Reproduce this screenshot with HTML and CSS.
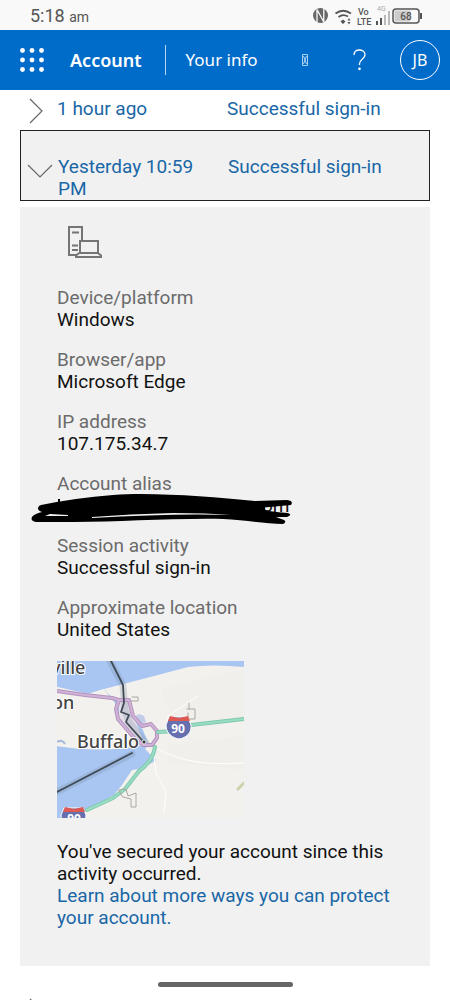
FILE: index.html
```html
<!DOCTYPE html>
<html lang="en">
<head>
<meta charset="utf-8">
<meta name="viewport" content="width=device-width, initial-scale=1">
<title>Account activity</title>
<link rel="stylesheet" href="styles.css">
</head>
<body>
<div class="screen">
  <div class="status">
    <div class="clock">5:18 <small>am</small></div>
    <svg class="status-icons" width="110" height="24" viewBox="0 0 110 24" aria-hidden="true">
      <circle cx="7.500" cy="11.500" r="7.500" fill="#666"/>
      <path d="M4 19.500V5.500L10.800 18V3.500" fill="none" stroke="#f9f9f9" stroke-width="1.300"/>
      <g fill="none" stroke="#555" stroke-width="1.800">
        <path d="M22.500 9.500Q30 4 38 9.500M25.500 13Q30 9.500 35 12.500"/>
      </g>
      <path d="M30 15.500l2.500 2-2.500 2.500-2.500-2.500zM36 14l1.500 2.500h-3zM36 20.500l1.500-2.500h-3z" fill="#555"/>
      <text x="45" y="11" class="net">Vo</text>
      <text x="44" y="21" class="net">LTE</text>
      <text x="64" y="7" class="gen">4G</text>
      <path d="M64 17v4M68 14v7" stroke="#555" stroke-width="2"/>
      <path d="M72 11v10M76 7v14" stroke="#bbb" stroke-width="2"/>
      <rect x="80" y="5" width="26" height="14" rx="3" fill="#f9f9f9" stroke="#555" stroke-width="1.500"/>
      <rect x="81.500" y="6.500" width="16" height="11" rx="1" fill="#ccc"/>
      <path d="M108 9v6" stroke="#555" stroke-width="2"/>
      <text x="93" y="16" class="level" text-anchor="middle">68</text>
    </svg>
  </div>

  <header class="header">
    <button class="apps" aria-label="App launcher">
      <svg width="24" height="24" viewBox="0 0 24 24" fill="#fff"><circle cx="2.500" cy="2.500" r="2.400"/><circle cx="12" cy="2.500" r="2.400"/><circle cx="21.500" cy="2.500" r="2.400"/><circle cx="2.500" cy="12" r="2.400"/><circle cx="12" cy="12" r="2.400"/><circle cx="21.500" cy="12" r="2.400"/><circle cx="2.500" cy="21.500" r="2.400"/><circle cx="12" cy="21.500" r="2.400"/><circle cx="21.500" cy="21.500" r="2.400"/></svg>
    </button>
    <a class="brand" href="#">Account</a>
    <a class="section" href="#">Your info</a>
    <button class="glyph" aria-label="More">
      <svg width="6" height="12" viewBox="0 0 6 12" fill="none" stroke="#d5e8f8" stroke-width=".8"><path d="M.5.500h5v11h-5zM1.500 2l3 8M4.500 2l-3 8"/></svg>
    </button>
    <button class="help" aria-label="Help">
      <svg width="13" height="22" viewBox="0 0 13 22" fill="none" stroke="#fff" stroke-width="1.300"><path d="M1 6C1 2.500 3.200 1 6.300 1S12 3 12 5.800C12 10 6.500 10 6.500 15v1"/><circle cx="6.500" cy="19.800" r=".7" fill="#fff"/></svg>
    </button>
    <button class="avatar">JB</button>
  </header>

  <main class="activity">
    <button class="event">
      <span class="mark"><svg width="14" height="26" viewBox="0 0 14 26" fill="none" stroke="#666" stroke-width="1.200"><path d="M1 1l12 12L1 25"/></svg></span>
      <span>1 hour ago</span><span>Successful sign-in</span>
    </button>
    <button class="event open" aria-expanded="true">
      <span class="mark"><svg width="26" height="14" viewBox="0 0 26 14" fill="none" stroke="#666" stroke-width="1.200"><path d="M1 1l12 12L25 1"/></svg></span>
      <span>Yesterday 10:59 PM</span><span>Successful sign-in</span>
    </button>

    <section class="panel">
      <svg class="device" width="36" height="34" viewBox="0 0 36 34" fill="none" stroke="#757575" stroke-width="2"><path d="M10 30H2V2h13v13M5 7.500h7M5 20.500h6M5 25h6"/><path d="M13 16h18v12H13zM12 28l-3 2.500V32h25v-1.500L31 28"/></svg>
      <dl class="facts">
        <div><dt>Device/platform</dt><dd>Windows</dd></div>
        <div><dt>Browser/app</dt><dd>Microsoft Edge</dd></div>
        <div><dt>IP address</dt><dd>107.175.34.7</dd></div>
        <div><dt>Account alias</dt><dd class="alias"><span>om</span>
          <svg class="scribble" width="264" height="34" viewBox="0 0 264 34" aria-hidden="true"><path d="M11 12Q45 5 83 2C125-1 181 4 225 8L257 7Q264 8 261 12L229 15Q238 19 258 20Q263 22 257 24L246 24L254 27Q257 29 253 31C236 31 215 27 193 26C145 25 89 29 44 29L6 29Q0 28 2 24Q4 21 12 19Q6 17 9 13z" fill="#000"/><path d="M225 8v9l10 2V10z" fill="#000"/><path d="M20 21L38 22 38 23 15 23zM62 24Q100 21 143 20Q178 20 201 22Q145 20 62 25z" fill="#f1f1f1"/><path d="M29 6v7" stroke="#000" stroke-width="2"/></svg>
        </dd></div>
        <div><dt>Session activity</dt><dd>Successful sign-in</dd></div>
        <div><dt>Approximate location</dt><dd>United States</dd></div>
      </dl>

      <svg class="map" width="187" height="157" viewBox="0 0 187 157" role="img" aria-label="Map of Buffalo">
        <rect width="187" height="157" fill="#f3f1ed"/>
        <g fill="#f0efeb"><path d="M104 28l83-20v49l-70 8zM112 84l75-9v34l-76-8z"/></g>
        <path d="M0 0H187V6Q155 3 131 6L78 20 47 28Q56 39 64 40L73 37 76 52 86 69 92 84 88 88 99 99Q87 108 75 109L65 124 57 134 30 149 20 157H0V85Q35 91 68 87L89 84 77 74 61 61 57 45Q44 36 47 28L31 33 0 26z" fill="#a9c6f2"/>
        <path d="M0 26L31 33 47 28 58 42 59 60 79 84 68 87 37 88 0 85z" fill="#f3f1ed"/>
        <path d="M62 40L73 38 77 56 88 84 79 80 62 58z" fill="#e4dfe9"/>
        <path d="M0 81q5-3 8 2" fill="none" stroke="#a9b9dc" stroke-width="2"/>
        <path d="M82 53l5 2 2 6-4 2-8-7z" fill="#c3cce9"/>
        <g fill="none" stroke-linejoin="round" stroke-linecap="round">
          <path d="M97 96l2 16 10 18-2 22M101 88q30 18 86 14M111 73V55l30-20" stroke="#fff" stroke-width="1"/>
          <path d="M53 0l13 25 2 24 4 12 17 21M0 131l75-38" stroke="#73869d" stroke-width="7" opacity=".25"/>
          <path d="M0 30L28 34 55 37 62 39 59 48 61 58 78 78 86 84H95L100 77V70L94 63 85 65 76 55 72 39 62 39" stroke="#b494bd" stroke-width="4"/>
          <path d="M0 30L28 34 55 37 62 39 59 48 61 58 78 78 86 84H95L100 77V70L94 63 85 65 76 55 72 39 62 39" stroke="#d0b1d7" stroke-width="2"/>
          <path d="M187 58L134 64 119 70 101 71M98 86Q96 100 82 110L68 128 56 137 30 149" stroke="#7dc9ae" stroke-width="4"/>
          <path d="M187 58L134 64 119 70 101 71M98 86Q96 100 82 110L68 128 56 137 30 149" stroke="#9adcc4" stroke-width="2"/>
          <path d="M54 0l12 24 1 18-3 9 8 3-3 7 16 18M0 131l75-39" stroke="#414a57" stroke-width="1.800"/>
          <path d="M75 36h6v4h-7M132 42v6M130 48h8v10h-7v-6M62 129l7-1 2 7 8-3v14h-5v-8l-8-2z" stroke="#aaa89f" stroke-width="1"/>
          <path d="M181 128l6-6" stroke="#cbd3ad" stroke-width="3"/>
        </g>
        <g><path d="M112 56l-3 8c0 9 7 13 13 14 7-1 13-6 12-14l-3-8z" fill="#6670ae" stroke="#fff"/><path d="M111 60l2-5 9 2 9-2 2 5z" fill="#dd5a54"/></g>
        <text x="121" y="72" class="route" text-anchor="middle">90</text>
        <g><path d="M7 147l-3 7c0 8 7 12 13 13 7-1 12-6 12-13l-3-7z" fill="#6670ae" stroke="#fff"/><path d="M6 151l2-5 9 2 9-2 2 5z" fill="#dd5a54"/></g>
        <text x="17" y="162" class="route" text-anchor="middle">90</text>
        <g class="place"><text x="-6" y="13">ville</text><text x="-5" y="48">on</text><text x="20" y="87">Buffalo</text></g>
        <circle cx="87" cy="81" r="2" fill="#333" stroke="#fff" stroke-width=".8"/>
      </svg>

      <p class="note">You've secured your account since this activity occurred.<br><a href="#">Learn about more ways you can protect your account.</a></p>
    </section>
    <button class="event next" aria-label="Next activity">
      <span class="mark"><svg width="14" height="26" viewBox="0 0 14 26" fill="none" stroke="#666" stroke-width="1.200"><path d="M1 1l12 12L1 25"/></svg></span>
    </button>
  </main>
  <div class="home-bar"></div>
</div>
</body>
</html>
```
FILE: styles.css
```css
* { box-sizing: border-box; }
body { margin: 0; background: #fff; color: #111; font: 19px/22px Roboto, sans-serif; }
button { border: 0; padding: 0; background: none; color: inherit; font: inherit; text-align: left; }
a { color: #1967a6; text-decoration: none; }
svg { display: block; }

.screen { position: relative; height: 100vh; overflow: hidden; }

.status { display: flex; justify-content: space-between; align-items: center; height: 30px; padding: 2px 27px 0 30px; background: #f9f9f9; color: #555; }
.clock { font-size: 18px; }
.clock small { font-size: 14px; }
.status-icons { font-family: Roboto, sans-serif; }
.net { font-size: 9px; font-weight: 500; fill: #555; }
.gen { font-size: 7px; fill: #aaa; }
.level { font-size: 10px; font-weight: 500; fill: #555; }

.header { display: flex; align-items: center; height: 60px; padding: 0 10px 0 20px; background: #006cc9; color: #fff; font-family: "Noto Sans", "Open Sans", sans-serif; }
.header a { color: #fff; }
.brand { margin-left: 26px; padding-right: 23px; border-right: 1px solid #b7d6f2; font-size: 18px; font-weight: 600; line-height: 30px; }
.section { margin-left: 20px; font-size: 17px; }
.glyph { margin-left: auto; }
.help { margin-left: 45px; }
.avatar { width: 40px; height: 40px; margin-left: 34px; border: 1px solid #fff; border-radius: 50%; font-size: 16px; text-align: center; }

.activity { padding: 0 20px; }
.event { display: grid; grid-template-columns: 37px 170px 1fr; align-items: start; width: 100%; height: 40px; padding-top: 8px; color: #1967a6; }
.event > span:nth-child(2) { padding-right: 30px; }
.mark { display: flex; justify-content: center; align-items: center; height: 26px; padding-right: 5px; }
.open { height: 71px; padding-top: 25px; border: 1px solid #222; background: #f1f1f1; }
.open .mark { padding-right: 0; height: 30px; }
.panel { margin-top: 6px; padding: 18px 37px 37px; background: #f1f1f1; }
.device { margin-left: 10px; }
.facts { display: flex; flex-direction: column; gap: 18px; margin: 28px 0 0; }
dt { color: #6b6b6b; }
dd { margin: 0; }
.alias { position: relative; height: 22px; padding-left: 205px; }
.scribble { position: absolute; left: -27px; top: -2px; }
.map { margin-top: 20px; }
.place { font: 500 18px "Noto Sans", "Open Sans", sans-serif; fill: #444; stroke: #fff; stroke-width: 2px; paint-order: stroke; }
.route { font: 700 12px "Open Sans", sans-serif; fill: #fff; }
.note { margin: 23px 0 0; }
.next { margin-top: 24px; }
.home-bar { position: absolute; bottom: 13px; left: 35%; width: 30%; height: 5px; border-radius: 3px; background: #666; }
```
